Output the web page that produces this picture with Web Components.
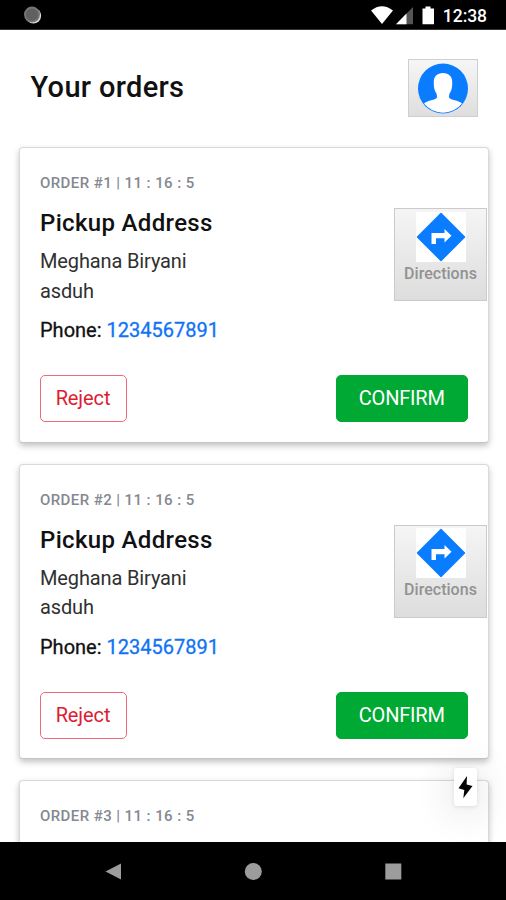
<!DOCTYPE html>
<html lang="en">
<head>
<meta charset="utf-8">
<title>Your orders</title>
<style>
html,body{margin:0;height:100%;overflow:hidden;background:#fff;font-family:Roboto,"Liberation Sans",sans-serif}
</style>
</head>
<body>
<orders-app></orders-app>
<script>
function define(name, html, setup) {
  const t = document.createElement('template');
  t.innerHTML = html;
  customElements.define(name, class extends HTMLElement {
    constructor() {
      super();
      this.attachShadow({mode: 'open'}).appendChild(t.content.cloneNode(true));
    }
    connectedCallback() { if (setup) setup(this); }
  });
}

define('status-bar', `
<style>
:host{display:flex;box-sizing:border-box;height:30px;flex:none;background:#000;border-bottom:1px solid #333;color:#fff;justify-content:space-between;padding:0 19px 0 23px}
svg{display:block}
.right{display:flex}
.time{font-weight:500;font-size:17.5px;line-height:32px;margin-left:7.5px;letter-spacing:-.05px}
</style>
<svg width="20" height="30"><circle cx="10.3" cy="15.8" r="7.8" fill="#ddd"/><circle cx="9" cy="14.6" r="8" fill="#777"/><circle cx="9" cy="14.6" r="6.2" fill="#606060"/></svg>
<div class="right">
<svg width="65" height="30" viewBox="370 0 65 30">
<path d="M371 10.500Q382 2 393 10.500L382 24Z" fill="#fff"/>
<path d="M413 7V24.300H396Z" fill="#555"/><path d="M406.500 13.600V24.300H396Z" fill="#fff"/>
<path d="M425.500 6.500h5v2h3.500v15.800h-11.500v-15.800h3z" fill="#fff"/>
</svg>
<span class="time">12:38</span>
</div>`);

define('profile-button', `
<style>
:host{display:block;box-sizing:border-box;width:70px;height:58px;border:1px solid #cfcfcf;background:linear-gradient(#f6f6f6,#dedede)}
svg{display:block;margin:3px 0 0 9px}
</style>
<svg width="50" height="52" viewBox="0 0 50 52">
<circle cx="25" cy="25.500" r="25" fill="#0a7cff"/>
<path d="M25 10C19 10 15.800 13.500 15.800 19C15.600 25 16.500 28 18.700 31L19 34.500C17 37.500 10 37 6 40.500A24.300 24.300 0 0 0 44 40.500C40 37 33 37.500 31 34.500L31.300 31C33.500 28 34.400 25 34.200 19C34.200 13.500 31 10 25 10Z" fill="#fff"/>
</svg>`);

define('page-header', `
<style>
:host{display:flex;box-sizing:border-box;justify-content:space-between;padding:28.500px 27.600px 0 30.500px;height:117px}
h1{margin:8px 0 0;font-size:29px;line-height:40px;font-weight:500;color:#111;letter-spacing:.32px}
</style>
<h1><slot></slot></h1><profile-button></profile-button>`);

define('directions-button', `
<style>
:host{display:flex;flex-direction:column;align-items:center;box-sizing:border-box;width:93px;height:93px;border:1px solid #cacaca;background:linear-gradient(#f5f5f5,#dddddd);padding-top:2.500px}
svg{display:block;background:#fff}
span{font-size:16px;line-height:22px;font-weight:500;color:#929292;letter-spacing:.02px;margin-top:1px}
</style>
<svg width="50" height="50" viewBox="0 0 50 50"><path d="M25 1.500L48.500 25L25 48.500L1.500 25Z" fill="#0a7cff" stroke="#0a7cff" stroke-width="1.500" stroke-linejoin="round"/><path d="M15.500 32V21H28.500V17L35.500 23.700L28.500 30.500V26.200H20V32Z" fill="#fff"/></svg>
<span>Directions</span>`);

define('action-button', `
<style>
:host{display:block;box-sizing:border-box;height:47px;border-radius:5px;text-align:center;font-size:20px;line-height:45px;border:1px solid #ee6a7b;color:#dd1c34;width:87px;background:#fff;letter-spacing:-.1px}
:host([kind=confirm]){width:132.500px;background:#00a933;border-color:#00a933;color:#fff;letter-spacing:-.2px}
</style><slot></slot>`);

define('order-card', `
<style>
:host{display:block;box-sizing:border-box;height:295.500px;flex:none;border:1px solid #d9d9d9;border-bottom-color:#c4c4c4;border-radius:4px;background:#fff;box-shadow:0 3px 6px rgba(0,0,0,.24);padding:25px 20px 0;color:#111}
.meta{font-size:15px;line-height:20px;color:#858890;letter-spacing:.42px;font-weight:500;white-space:nowrap}
.body{display:flex;justify-content:space-between;margin:1px -19px 0 0}
h2{margin:14px 0 9px;font-size:24px;line-height:30px;font-weight:500;letter-spacing:.33px}
.addr{font-size:20px;line-height:29.500px;color:#303030;letter-spacing:-.13px}
.phone{font-size:20px;line-height:30px;margin-top:9px;letter-spacing:0;-webkit-text-stroke:.3px currentColor}
.phone b{font-weight:400;color:#1073f5}
directions-button{margin-top:14px}
.actions{display:flex;justify-content:space-between;margin:30px 0 0 -.500px}
:host([peek]) .body,:host([peek]) .actions{display:none}
</style>
<div class="meta"></div>
<div class="body"><div><h2>Pickup Address</h2>
<div class="addr"><slot name="name"></slot></div><div class="addr"><slot name="street"></slot></div>
<div class="phone"><span>Phone: </span><b><slot name="phone"></slot></b></div></div>
<directions-button></directions-button></div>
<div class="actions"><action-button>Reject</action-button><action-button kind="confirm">CONFIRM</action-button></div>`,
el => { el.shadowRoot.querySelector('.meta').textContent = 'ORDER #' + el.getAttribute('number') + ' | 11 : 16 : 5'; });

define('quick-action', `
<style>
:host{display:block;position:absolute;left:454px;top:768px;width:23px;height:38px;border-radius:3px;background:#fff;box-shadow:0 4px 36px 6px rgba(0,0,0,.09),0 1px 4px rgba(0,0,0,.1)}
svg{display:block}
</style>
<svg width="23" height="38" viewBox="0 0 23 38"><path d="M13 8L4.500 20.300L10.300 22L9.300 30.300L18.500 18L12.600 16.500Z" fill="#050505"/></svg>`);

define('nav-bar', `
<style>
:host{display:block;flex:none;height:58px;background:#000}
svg{display:block}
</style>
<svg width="506" height="58" viewBox="0 842 506 58" fill="#9c9c9c"><path d="M105.500 871.500L121 863.500V879.500Z"/><circle cx="253.300" cy="871.400" r="8.500"/><rect x="385.300" y="863.500" width="16" height="16"/></svg>`);

define('orders-app', `
<style>
:host{display:flex;flex-direction:column;position:relative;width:506px;height:900px;overflow:hidden;background:#fff}
main{flex:1;min-height:0;overflow:hidden}
.list{display:flex;flex-direction:column;gap:21.200px;padding:0 17px 0 19px}
</style>
<status-bar></status-bar>
<main><page-header>Your orders</page-header>
<div class="list">
${[1,2].map(n => `<order-card number="${n}"><span slot="name">Meghana Biryani</span><span slot="street">asduh</span><span slot="phone">1234567891</span></order-card>`).join('')}
<order-card number="3" peek></order-card>
</div></main>
<quick-action></quick-action>
<nav-bar></nav-bar>`);
</script>
</body>
</html>
